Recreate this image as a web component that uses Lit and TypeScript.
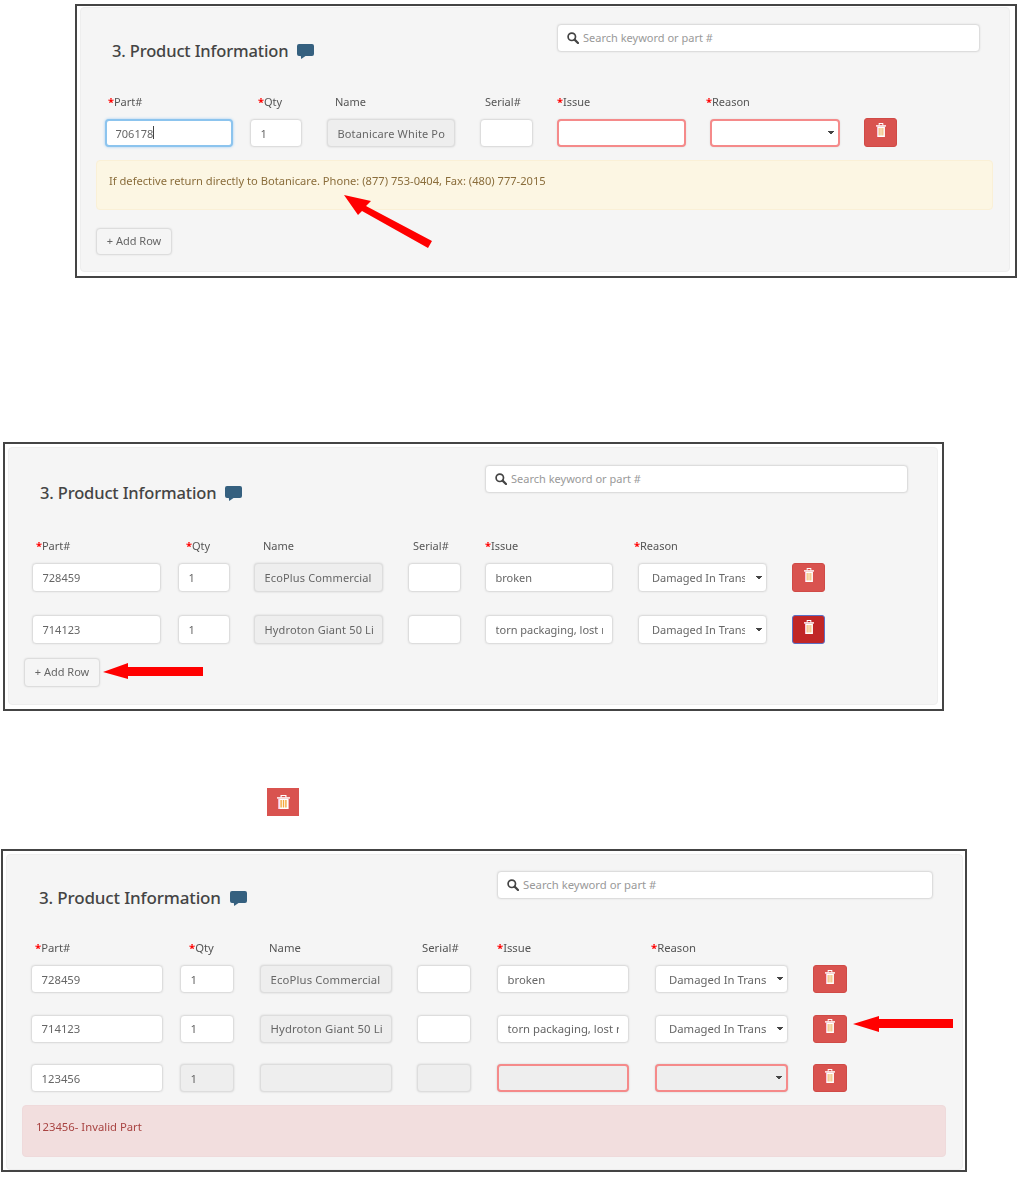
import { LitElement, html, css, svg } from "lit";
import { customElement } from "lit/decorators.js";

type Cell = { v?: string; off?: boolean; bad?: boolean };
type Row = { part: string; qty: Cell; name: string; serial: Cell; issue: Cell; reason: Cell; btn?: string };
type Frame = {
  cls: string;
  cols: [number, number][];
  labels: number[];
  rows: Row[];
  warn?: string;
  err?: string;
  add: boolean;
};

const DMG = "Damaged In Transit";

const frames: Frame[] = [
  {
    cls: "f1",
    cols: [[128, 17], [52, 25], [128, 25], [53, 24], [129, 24], [130, 24], [33, 0]],
    labels: [3, 8, 8, 5, 0, -4],
    rows: [
      { part: "706178", qty: { v: "1" }, name: "Botanicare White Powder", serial: {}, issue: { bad: true }, reason: { bad: true } },
    ],
    warn: "If defective return directly to Botanicare. Phone: (877) 753-0404, Fax: (480) 777-2015",
    add: true,
  },
  {
    cls: "f2",
    cols: [[129, 17], [52, 24], [129, 25], [53, 24], [128, 25], [129, 25], [33, 0]],
    labels: [4, 8, 9, 5, 0, -4],
    rows: [
      { part: "728459", qty: { v: "1" }, name: "EcoPlus Commercial", serial: {}, issue: { v: "broken" }, reason: { v: DMG } },
      { part: "714123", qty: { v: "1" }, name: "Hydroton Giant 50 Liter Bag", serial: {}, issue: { v: "torn packaging, lost rolls" }, reason: { v: DMG }, btn: "active" },
    ],
    add: true,
  },
  {
    cls: "f3",
    cols: [[132, 17], [54, 26], [132, 25], [54, 26], [132, 26], [133, 25], [34, 0]],
    labels: [4, 9, 9, 5, 0, -4],
    rows: [
      { part: "728459", qty: { v: "1" }, name: "EcoPlus Commercial", serial: {}, issue: { v: "broken" }, reason: { v: DMG } },
      { part: "714123", qty: { v: "1" }, name: "Hydroton Giant 50 Liter Bag", serial: {}, issue: { v: "torn packaging, lost rolls" }, reason: { v: DMG } },
      { part: "123456", qty: { v: "1", off: true }, name: "", serial: { off: true }, issue: { off: true, bad: true }, reason: { off: true, bad: true } },
    ],
    err: "123456- Invalid Part",
    add: false,
  },
];

const trash = (slot: string, w: number, h: number) => svg`
  <svg class="can" viewBox="0 0 13 14" width=${w} height=${h} preserveAspectRatio="none" aria-hidden="true">
    <path fill="#fff" d="M3.5 2.4V0h6v2.4h-1.2V1.1H4.7v1.3z"/>
    <path fill="#fff" d="M0 2.2h13v1.4H0z"/>
    <path fill="#fff" d="M1.4 3.6h10.2V14H1.4z"/>
    <path fill="#f7b7dc" d="M1.4 3.6h1V14h-1z"/>
    <path fill="${slot}" d="M3.4 5h1.4v7.6H3.4zM5.8 5h1.4v7.6H5.8zM8.2 5h1.4v7.6H8.2z"/>
  </svg>`;

@customElement("app-root")
export class AppRoot extends LitElement {
  static styles = css`
    :host { display: block; position: relative; width: 1018px; height: 1177px; overflow: hidden; background: #fff;
      font-family: "Noto Sans", "Open Sans", sans-serif; color: #666; }
    * { box-sizing: border-box; }
    .page { display: flex; flex-direction: column; align-items: flex-start; }

    .frame { border: 2px solid #444; background: #fff; }
    .panel { background: #f5f5f5; border: 1px solid #eee; border-radius: 4px; filter: blur(.6px); }
    .f1 { --fs: 11px; --h: 28px; --bh: 29px; --title: 16.5px; margin: 4px 0 0 75px; width: 942px; padding: 1px 5px 4px 3px; }
    .f1 .panel { width: 930px; height: 265px; padding: 16px 0 0 24px; }
    .f1 .head { height: 70px; margin-left: 7px; --search: 423px; --sright: 29px; --tt: 13px; }
    .f2 { --fs: 11px; --h: 29px; --bh: 29px; --title: 16.5px; margin: 164px 0 0 3px; width: 941px; padding: 3px 4px 4px 3px; }
    .f2 .panel { width: 930px; height: 258px; padding: 17px 0 0 23px; }
    .f2 .head { height: 73px; margin-left: 8px; --search: 423px; --sright: 29px; --tt: 14px; }
    .f3 { --fs: 11.3px; --h: 28px; --bh: 28px; --title: 17px; margin: 33px 0 0 1px; width: 966px; height: 323px; padding: 3px 2px 0 3px; }
    .f3 .panel { width: 957px; height: 316px; padding: 16px 0 0 24px; }
    .f3 .head { height: 69px; margin-left: 8px; --search: 436px; --sright: 29px; --tt: 13px; }

    .head { display: flex; align-items: flex-start; justify-content: space-between; }
    .title { display: flex; align-items: center; gap: 9px; margin: var(--tt) 0 0; font-size: var(--title); font-weight: 500; letter-spacing: -.15px;
      line-height: 28px; color: #444; white-space: nowrap; }
    .search { display: flex; align-items: center; gap: 4px; width: var(--search); margin-right: var(--sright); height: 28px; padding-left: 9px;
      background: #fff; border: 1px solid #ddd; border-radius: 4px; box-shadow: 0 0 2px #ddd; }
    .search input { flex: 1; min-width: 0; height: 24px; margin-top: -1px; border: 0; padding: 0; background: none; outline: 0; font: inherit; font-size: var(--fs); color: #666; }
    .search input::placeholder { color: #999; opacity: 1; }

    .line { display: flex; align-items: flex-start; }
    .labels { margin-bottom: 9px; font-size: var(--fs); line-height: 16px; color: #555; }
    .lab { white-space: nowrap; }
    .star { color: #f00; font-weight: 700; }
    .rows { display: flex; flex-direction: column; }
    .f2 .rows { gap: 23px; } .f3 .rows { gap: 21.5px; }

    .field { position: relative; display: block; width: 100%; height: var(--h); padding: 0 9.5px; background-color: #fff; color: #666;
      font: inherit; font-size: var(--fs); border: 1px solid #ddd; border-radius: 4px; box-shadow: 0 0 2px #ddd; outline: 0; appearance: none; }
    .field.off { background-color: #eee; border-color: #ddd; box-shadow: 0 0 2px #ccc; letter-spacing: .15px; }
    .field.bad { border: 2px solid #f58a8a; }
    .field.focus { padding: 0 8.5px; border: 2px solid #8cc4ee; box-shadow: 0 0 3px #9fcdf2; }
    select.field { padding: 0 21px 0 13px;
      background-image: linear-gradient(45deg, transparent 50%, #444 50%), linear-gradient(135deg, #444 50%, transparent 50%);
      background-size: 3px 4px, 3px 4px; background-repeat: no-repeat;
      background-position: calc(100% - 7px) 50%, calc(100% - 4px) 50%; }
    .wrap { position: relative; }
    .caret { position: absolute; left: 48px; top: 7px; width: 1px; height: 13px; background: #444; }

    .btn { display: flex; align-items: center; justify-content: center; width: 100%; height: var(--bh); padding: 0 0 5px; background: #d9534f;
      border: 1px solid #d04a46; border-radius: 3px; }
    .f1 .btn { margin-top: -1px; }
    .btn.active { background: #c12626; border-color: #5b6fc4; }
    .can { display: block; }

    .alert { border-radius: 4px; font-size: var(--fs); line-height: 16px; }
    .warn { margin: 13px 0 0 -9px; width: 897px; height: 50px; padding: 12px 12px; background: #fcf6e3; border: 1px solid #faf0d6; color: #8a6d3b; font-size: 11.15px; }
    .err { margin: 13px 0 0 -9px; width: 924px; height: 52px; padding: 13px 13px; background: #f2dede; border: 1px solid #efdadb; color: #a94442; }

    .add { display: block; width: 76px; padding: 0 0 2px; text-align: center; background: #f5f5f5; border: 1px solid #ddd; border-radius: 4px;
      box-shadow: 0 0 2px #ddd; font: inherit; font-size: var(--fs); color: #666; }
    .f1 .add { margin: 18px 0 0 -9px; height: 27px; } .f2 .add { margin: 14px 0 0 -8px; height: 29px; }

    .solo { display: flex; align-items: center; justify-content: center; width: 32px; height: 28px; margin: 77px 0 0 267px; background: #d9534f; }

    .arrows { position: absolute; inset: 0; width: 1018px; height: 1177px; pointer-events: none; }
  `;

  private bubble() {
    return html`<svg viewBox="0 0 17 15" width="17" height="15" aria-hidden="true">
      <path fill="#35607f" d="M2 0h13a2 2 0 0 1 2 2v8a2 2 0 0 1-2 2H8.5L4.2 15l-.4-3H2a2 2 0 0 1-2-2V2a2 2 0 0 1 2-2z"/>
    </svg>`;
  }

  private lens() {
    return html`<svg viewBox="0 0 12 12" width="12" height="12" aria-hidden="true">
      <circle cx="4.8" cy="4.8" r="3.7" fill="none" stroke="#444" stroke-width="1.7"/>
      <path d="M7.6 7.6 11 11" stroke="#444" stroke-width="2.2" stroke-linecap="round"/>
    </svg>`;
  }

  private cell(f: Frame, i: number, content: unknown) {
    const [w, g] = f.cols[i];
    return html`<div class="wrap" style="width:${w}px;margin-right:${g}px">${content}</div>`;
  }

  private cls(c: Cell) {
    return `field${c.off ? " off" : ""}${c.bad ? " bad" : ""}`;
  }

  private row(f: Frame, r: Row) {
    const focus = r.part === "706178";
    return html`<div class="line">
      ${this.cell(f, 0, html`<input class="field ${focus ? "focus" : ""}" .value=${r.part} />${focus ? html`<span class="caret"></span>` : ""}`)}
      ${this.cell(f, 1, html`<input class=${this.cls(r.qty)} .value=${r.qty.v ?? ""} />`)}
      ${this.cell(f, 2, html`<input class="field off" disabled .value=${r.name} />`)}
      ${this.cell(f, 3, html`<input class=${this.cls(r.serial)} .value=${r.serial.v ?? ""} />`)}
      ${this.cell(f, 4, html`<input class=${this.cls(r.issue)} .value=${r.issue.v ?? ""} />`)}
      ${this.cell(f, 5, html`<select class=${this.cls(r.reason)}>${r.reason.v ? html`<option>${r.reason.v}</option>` : html`<option></option>`}</select>`)}
      ${this.cell(f, 6, html`<button class="btn ${r.btn ?? ""}" aria-label="Delete row">${trash("#efb566", 10, 14)}</button>`)}
    </div>`;
  }

  private frame(f: Frame) {
    const names = [["*", "Part#"], ["*", "Qty"], ["", "Name"], ["", "Serial#"], ["*", "Issue"], ["*", "Reason"]];
    return html`<section class="frame ${f.cls}">
      <div class="panel">
        <div class="head">
          <h3 class="title">3. Product Information ${this.bubble()}</h3>
          <label class="search">${this.lens()}<input placeholder="Search keyword or part #" /></label>
        </div>
        <div class="line labels">
          ${names.map(([s, n], i) => html`<div style="width:${f.cols[i][0]}px;margin-right:${f.cols[i][1]}px"><div class="lab" style="margin-left:${f.labels[i]}px">${s ? html`<span class="star">*</span>` : ""}${n}</div></div>`)}
        </div>
        <div class="rows">${f.rows.map((r) => this.row(f, r))}</div>
        ${f.warn ? html`<div class="alert warn">${f.warn}</div>` : ""}
        ${f.err ? html`<div class="alert err">${f.err}</div>` : ""}
        ${f.add ? html`<button class="add">+ Add Row</button>` : ""}
      </div>
    </section>`;
  }

  render() {
    return html`<div class="page">
        ${this.frame(frames[0])}
        ${this.frame(frames[1])}
        <div class="solo">${trash("#f5a83c", 13, 14)}</div>
        ${this.frame(frames[2])}
      </div>
      <svg class="arrows" viewBox="0 0 1018 1177" aria-hidden="true">
        <path fill="#f00" d="M344 195 371 201 366 206 432 241 428 248 362 211 358 215z"/>
        <path fill="#f00" d="M103 672 128 663V667H203V676H128V679z"/>
        <path fill="#f00" d="M853 1024 879 1016V1019H953V1028H879V1032z"/>
      </svg>`;
  }
}
